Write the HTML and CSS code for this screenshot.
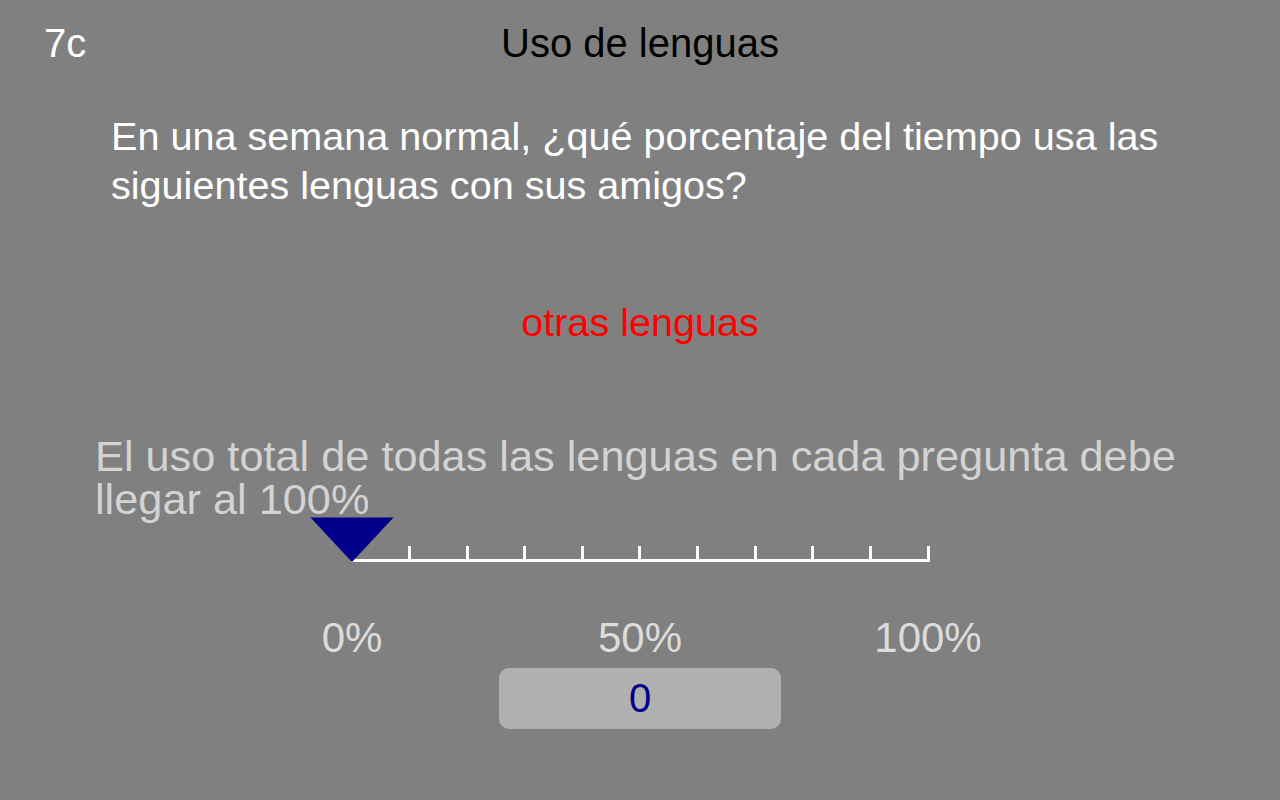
FILE: index.html
```html
<!DOCTYPE html>
<html lang="es">
<head>
<meta charset="utf-8">
<title>Uso de lenguas</title>
<link rel="stylesheet" href="styles.css">
</head>
<body>
<div class="screen">
  <header class="topbar">
    <div class="code">7c</div>
    <div class="title">Uso de lenguas</div>
    <div class="spacer"></div>
  </header>
  <p class="question">En una semana normal, ¿qué porcentaje del tiempo usa las siguientes lenguas con sus amigos?</p>
  <div class="lang">otras lenguas</div>
  <p class="warning">El uso total de todas las lenguas en cada pregunta debe llegar al 100%</p>
  <svg class="slider" width="1280" height="48" viewBox="0 0 1280 48" aria-hidden="true">
    <rect x="351" y="42" width="579" height="3" fill="#ffffff"/>
    <rect x="408" y="29" width="3" height="14" fill="#ffffff"/>
    <rect x="466" y="29" width="3" height="14" fill="#ffffff"/>
    <rect x="523" y="29" width="3" height="14" fill="#ffffff"/>
    <rect x="581" y="29" width="3" height="14" fill="#ffffff"/>
    <rect x="638" y="29" width="3" height="14" fill="#ffffff"/>
    <rect x="696" y="29" width="3" height="14" fill="#ffffff"/>
    <rect x="754" y="29" width="3" height="14" fill="#ffffff"/>
    <rect x="811" y="29" width="3" height="14" fill="#ffffff"/>
    <rect x="869" y="29" width="3" height="14" fill="#ffffff"/>
    <rect x="927" y="29" width="3" height="16" fill="#ffffff"/>
    <polygon points="310.5,0.5 393.5,0.5 352,45" fill="#00008b"/>
  </svg>
  <div class="scale">
    <span>0%</span>
    <span>50%</span>
    <span>100%</span>
  </div>
  <div class="value">0</div>
</div>
</body>
</html>
```

FILE: styles.css
```css
html, body {
  margin: 0;
  padding: 0;
  background: #808080;
}

body {
  font-family: "Liberation Sans", Arial, Helvetica, sans-serif;
  width: 1280px;
  height: 800px;
  overflow: hidden;
}

.screen {
  display: flex;
  flex-direction: column;
}

.topbar {
  display: grid;
  grid-template-columns: 1fr auto 1fr;
  align-items: baseline;
  padding-top: 19px;
  font-size: 40px;
  line-height: 48px;
}

.code {
  color: #ffffff;
  padding-left: 44px;
}

.title {
  color: #000000;
}

.question {
  margin: 45px 0 0 0;
  padding-left: 111px;
  width: 1080px;
  color: #ffffff;
  font-size: 39.6px;
  line-height: 49px;
}

.lang {
  margin-top: 88px;
  text-align: center;
  color: #ff0000;
  font-size: 39.6px;
  line-height: 48px;
}

.warning {
  margin: 89px 0 0 0;
  padding-left: 95px;
  width: 1100px;
  color: #d3d3d3;
  font-size: 43.3px;
  line-height: 43px;
}

.slider {
  display: block;
  margin-top: -4px;
}

.scale {
  display: grid;
  grid-template-columns: repeat(3, 288px);
  margin: 49px 0 0 208px;
  color: #dcdcdc;
  font-size: 42px;
  line-height: 48px;
  text-align: center;
}

.value {
  align-self: flex-start;
  margin: 6px 0 0 499px;
  width: 282px;
  height: 61px;
  border-radius: 10px;
  background: #b0b0b0;
  color: #00008b;
  font-size: 40px;
  line-height: 61px;
  text-align: center;
}
```
